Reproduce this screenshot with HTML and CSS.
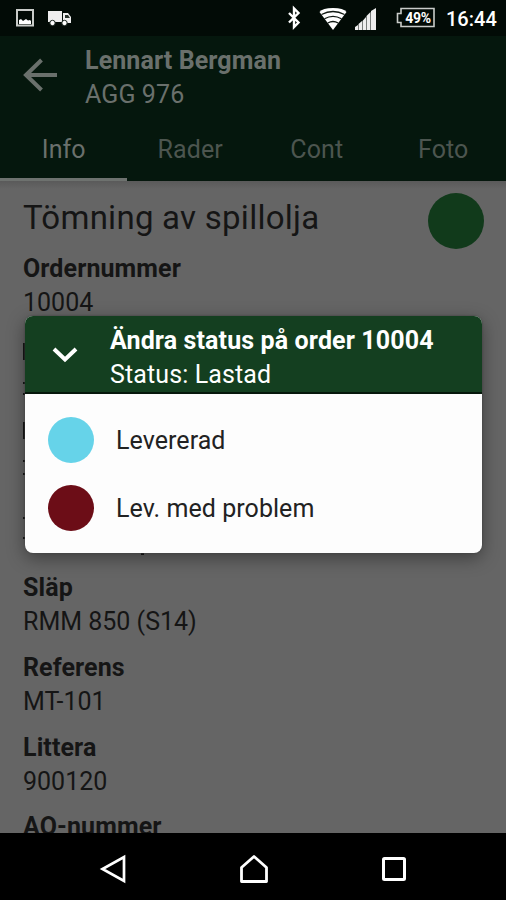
FILE: index.html
```html
<!DOCTYPE html>
<html lang="sv">
<head>
<meta charset="utf-8">
<title>Order 10004</title>
<link rel="stylesheet" href="styles.css">
</head>
<body>
<div class="phone">
  <div class="statusbar">
    <svg class="notices" width="58" height="20" viewBox="0 0 58 20">
      <rect x="1" y="2" width="16" height="15.500" fill="none" stroke="#c9ccc9" stroke-width="2"/>
      <path d="M3 16v-4l2-1 2 2 3-2 2 1.500 2-.5 1 1v3z" fill="#fff"/>
      <path d="M32 3h14v11H32z M47 5h5l3 4v6h-8z" fill="#eee"/>
      <path d="M49 7h3l2 3h-5z" fill="#29332c"/>
      <circle cx="36.500" cy="15" r="2.700" fill="#fff" stroke="#152019"/>
      <circle cx="48.500" cy="15" r="2.700" fill="#fff" stroke="#152019"/>
    </svg>
    <div class="system">
      <svg width="92" height="26" viewBox="286 5 92 26">
        <path d="M288 13l9.500 9.500-4.500 4.500V8.500l4.500 4.500-9.500 9.500" fill="none" stroke="#fff" stroke-width="2.400"/>
        <path d="M332 30L318.500 12q3-4 13.500-4t13.500 4z" fill="#fff"/>
        <path d="M320.500 14.500q11.500-6 23 0M323.500 18.800q8.500-5 17 0M326.800 23q5.200-3 10.400 0" fill="none" stroke="#101812" stroke-width="1.300"/>
        <path d="M354 30v-3l3-2v5zM357.500 30v-6l3.500-3v9zM361.500 30v-9l3.500-4v13zM365.500 30V16l4-4v18zM370 30V11l5-3v22z" fill="#eee"/>
      </svg>
      <div class="battery">
        <svg width="40" height="22" viewBox="0 0 40 22"><path d="M5 1.500h33v18H5v-4H1.500v-9H5z" fill="none" stroke="#c9ccc9" stroke-width="1.600"/></svg>
        <span class="percent">49%</span>
      </div>
      <span class="clock">16:44</span>
    </div>
  </div>

  <header class="appbar">
    <div class="heading">
      <svg class="back" width="36" height="34" viewBox="0 0 36 34"><path d="M19.500 2L4 17l15.500 15M4 17h31" fill="none" stroke="#6a706c" stroke-width="4"/></svg>
      <div class="who">
        <div class="name">Lennart Bergman</div>
        <div class="plate">AGG 976</div>
      </div>
    </div>
    <nav class="tabs">
      <div class="tab active">Info</div>
      <div class="tab">Rader</div>
      <div class="tab">Cont</div>
      <div class="tab">Foto</div>
    </nav>
  </header>

  <main class="content">
    <div class="titlerow">
      <h1>Tömning av spillolja</h1>
      <span class="state"></span>
    </div>
    <div class="field"><b>Ordernummer</b><span>10004</span></div>
    <div class="covered">
      <svg width="130" height="240" viewBox="0 0 130 240"><path d="M0 11h4v17H0zM0 50h4v2H0zM0 61h4v2H0zM0 90h4v17H0zM0 128h4v2H0zM0 141h4v2H0zM0 185h4v2H0zM0 205h4v2H0zM118 219h3v4h-3z" fill="#151515"/></svg>
    </div>
    <div class="field"><b>Släp</b><span>RMM 850 (S14)</span></div>
    <div class="field"><b>Referens</b><span>MT-101</span></div>
    <div class="field"><b>Littera</b><span>900120</span></div>
    <div class="field"><b>AO-nummer</b></div>
  </main>

  <div class="navbar">
    <svg width="28" height="30" viewBox="0 0 28 30"><path d="M25 3v24L3.500 15z" fill="none" stroke="#fff" stroke-width="2.700"/></svg>
    <svg width="30" height="30" viewBox="0 0 30 30"><path d="M2.500 27.500V13.500L15 2.500l12.500 11v14z" fill="none" stroke="#fff" stroke-width="2.800" stroke-linejoin="round"/></svg>
    <svg width="26" height="26" viewBox="0 0 26 26"><rect x="2.500" y="2.500" width="21" height="21" rx="1" fill="none" stroke="#fff" stroke-width="3"/></svg>
  </div>

  <section class="dialog">
    <div class="dialog-head">
      <svg class="chevron" width="28" height="18" viewBox="0 0 28 18"><path d="M3 3l11 10.500L25 3" fill="none" stroke="#fff" stroke-width="4"/></svg>
      <div>
        <div class="dialog-title">Ändra status på order 10004</div>
        <div class="dialog-sub">Status: Lastad</div>
      </div>
    </div>
    <div class="options">
      <div class="option"><span class="dot blue"></span><span>Levererad</span></div>
      <div class="option"><span class="dot red"></span><span>Lev. med problem</span></div>
    </div>
  </section>
</div>
</body>
</html>
```
FILE: styles.css
```css
* { box-sizing: border-box; }
body { margin: 0; background: #000; font-family: Roboto, sans-serif; }
.phone { position: relative; width: 506px; height: 900px; display: flex; flex-direction: column; overflow: hidden; white-space: nowrap; }
.statusbar { height: 36px; flex: none; background: #020b06; display: flex; justify-content: space-between; padding: 5px 10px 0 16px; color: #fff; }
.notices { margin-top: 3px; }
.system { display: flex; }
.battery { position: relative; width: 40px; height: 22px; margin: 2px 0 0 17px; }
.percent { position: absolute; left: 7px; top: 3px; width: 30px; text-align: center; font-size: 14px; line-height: 16px; font-weight: 700; letter-spacing: -.3px; }
.clock { width: 50px; margin-left: 10px; font-size: 20px; line-height: 29px; font-weight: 500; }
.appbar { height: 145px; flex: none; background: #05170d; color: #6a706c; display: flex; flex-direction: column; justify-content: space-between; }
.heading { display: flex; padding: 8px 0 0 22px; }
.back { margin: 14px 27px 0 0; }
.name { font-weight: 700; font-size: 25px; line-height: 34px; letter-spacing: .1px; }
.plate { font-size: 25px; line-height: 34px; letter-spacing: .1px; }
.tabs { display: grid; grid-template-columns: repeat(4, 1fr); height: 64px; }
.tab { text-align: center; font-size: 25px; line-height: 66px; height: 64px; color: #4c554f; letter-spacing: .1px; padding-left: 1px; }
.tab.active { color: #6a706c; border-bottom: 3px solid #6e726f; }
.content { flex: 1; min-height: 0; overflow: hidden; background: linear-gradient(#5a5a5a, #656565 8px); color: #151515; padding: 12px 22px 0 23px; }
.titlerow { display: flex; justify-content: space-between; height: 59px; }
h1 { margin: 0; font-size: 33px; line-height: 50px; font-weight: 400; letter-spacing: .26px; }
.state { width: 56px; height: 56px; border-radius: 50%; background: #113a1b; }
.field { height: 79.800px; display: flex; flex-direction: column; align-items: flex-start; font-size: 25px; line-height: 34px; }
.field b { font-weight: 700; letter-spacing: .1px; }
.covered { height: 239.300px; }
.covered svg { display: block; }
.navbar { height: 67px; flex: none; background: #000; display: flex; justify-content: space-between; align-items: center; padding: 4px 99px 0 99px; }
.dialog { position: absolute; left: 25px; top: 316px; width: 457px; height: 237px; border-radius: 8px; background: #fdfdfd; overflow: hidden; box-shadow: 0 0 1px 1px #4446, 0 5px 18px rgba(0,0,0,.4); }
.dialog-head { height: 78px; background: #143f20; color: #fff; display: flex; padding: 8px 0 0 26px; border-bottom: 2px solid #07180c; }
.chevron { margin: 22px 31px 0 0; }
.dialog-title { font-size: 25px; line-height: 34px; font-weight: 700; letter-spacing: .12px; }
.dialog-sub { font-size: 25px; line-height: 34px; letter-spacing: .12px; }
.options { padding: 12px 0 0 23px; }
.option { display: flex; align-items: center; height: 68px; font-size: 25px; color: #222; letter-spacing: .06px; }
.option span + span { padding-top: 1px; }
.dot { width: 46px; height: 46px; border-radius: 50%; margin-right: 22px; }
.blue { background: #66d3e9; }
.red { background: #6c0d17; }
```
